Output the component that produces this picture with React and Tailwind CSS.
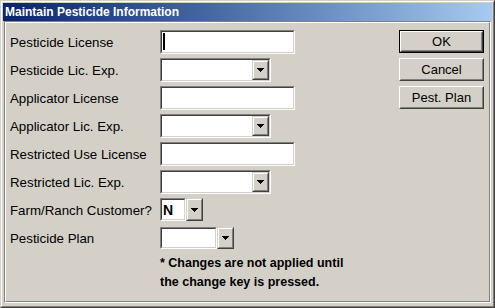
import React from "react";

const Arrow = () => (
  <svg width="7" height="4" viewBox="0 0 7 4" shapeRendering="crispEdges">
    <path d="M0 0h7v1H0z M1 1h5v1H1z M2 2h3v1H2z M3 3h1v1H3z" fill="#000" />
  </svg>
);

const Sunken = ({ className = "", children }) => (
  <div className={`border border-t-[#808080] border-l-[#808080] border-r-white border-b-white ${className}`}>
    <div className="h-full border border-t-[#404040] border-l-[#404040] border-r-[#d4d0c8] border-b-[#d4d0c8] bg-white flex items-center">
      {children}
    </div>
  </div>
);

const RaisedArrow = ({ className = "" }) => (
  <div className={`border border-t-[#d4d0c8] border-l-[#d4d0c8] border-r-[#404040] border-b-[#404040] ${className}`}>
    <div className="h-full border border-t-white border-l-white border-r-[#808080] border-b-[#808080] bg-[#d4d0c8] flex items-center justify-center">
      <Arrow />
    </div>
  </div>
);

const TextField = ({ cursor }) => (
  <Sunken className="w-[135px] h-[24px]">
    {cursor && <div className="ml-[1px] w-[2px] h-[17px] bg-black" />}
  </Sunken>
);

const Dropdown = () => (
  <Sunken className="w-[111px] h-[24px]">
    <div className="flex-1" />
    <RaisedArrow className="w-[17px] h-full" />
  </Sunken>
);

const Button = ({ children, isDefault }) =>
  isDefault ? (
    <div className="w-[85px] h-[23px] border border-black">
      <div className="h-full border border-t-white border-l-white border-r-[#404040] border-b-[#404040]">
        <div className="h-full border border-t-[#d4d0c8] border-l-[#d4d0c8] border-r-[#808080] border-b-[#808080] bg-[#d4d0c8] flex items-center justify-center text-[13px] leading-none text-black">
          {children}
        </div>
      </div>
    </div>
  ) : (
    <div className="w-[85px] h-[23px] border border-t-white border-l-white border-r-[#404040] border-b-[#404040]">
      <div className="h-full border border-t-[#d4d0c8] border-l-[#d4d0c8] border-r-[#808080] border-b-[#808080] bg-[#d4d0c8] flex items-center justify-center text-[13px] leading-none text-black">
        {children}
      </div>
    </div>
  );

const Row = ({ label, children }) => (
  <div className="flex items-center h-[23px]">
    <div className="w-[150px] pt-[3px] text-[13.3px] leading-none text-black">{label}</div>
    {children}
  </div>
);

export default function App() {
  return (
    <div
      className="w-[495px] h-[308px] bg-[#d4d0c8] border border-t-[#d4d0c8] border-l-[#d4d0c8] border-r-[#404040] border-b-[#404040]"
      style={{ fontFamily: '"Liberation Sans", Arial, sans-serif' }}
    >
      <div className="h-full border border-t-white border-l-white border-r-[#808080] border-b-[#808080] p-px flex flex-col">
        <div className="h-[18px] shrink-0 bg-gradient-to-r from-[#0a246a] to-[#a6caf0] flex items-center pl-[2px]">
          <span className="text-white font-bold text-[12px] leading-none">Maintain Pesticide Information</span>
        </div>
        <div className="flex-1 mx-px mb-[2px] border border-t-[#808080] border-l-[#808080] border-r-white border-b-white">
          <div className="h-full border border-t-white border-l-white border-r-[#808080] border-b-[#808080] flex pl-[4px] pt-[7px] pr-[5px]">
            <div className="flex flex-col gap-[5px]">
              <Row label="Pesticide License"><TextField cursor /></Row>
              <Row label="Pesticide Lic. Exp."><Dropdown /></Row>
              <Row label="Applicator License"><TextField /></Row>
              <Row label="Applicator Lic. Exp."><Dropdown /></Row>
              <Row label="Restricted Use License"><TextField /></Row>
              <Row label="Restricted Lic. Exp."><Dropdown /></Row>
              <Row label="Farm/Ranch Customer?">
                <div className="flex h-[23px]">
                  <Sunken className="w-[26px] h-[23px]">
                    <span className="ml-[1px] font-bold text-[14px] leading-none text-black">N</span>
                  </Sunken>
                  <RaisedArrow className="w-[17px] h-[23px]" />
                </div>
              </Row>
              <Row label="Pesticide Plan">
                <div className="flex h-[22px]">
                  <Sunken className="w-[57px] h-[22px]" />
                  <RaisedArrow className="w-[17px] h-[22px]" />
                </div>
              </Row>
              <div className="ml-[150px] mt-0 font-bold text-[12.5px] leading-[19px] text-black">
                <div>* Changes are not applied until</div>
                <div>the change key is pressed.</div>
              </div>
            </div>
            <div className="ml-auto flex flex-col gap-[5px]">
              <Button isDefault>OK</Button>
              <Button>Cancel</Button>
              <Button>Pest. Plan</Button>
            </div>
          </div>
        </div>
      </div>
    </div>
  );
}
